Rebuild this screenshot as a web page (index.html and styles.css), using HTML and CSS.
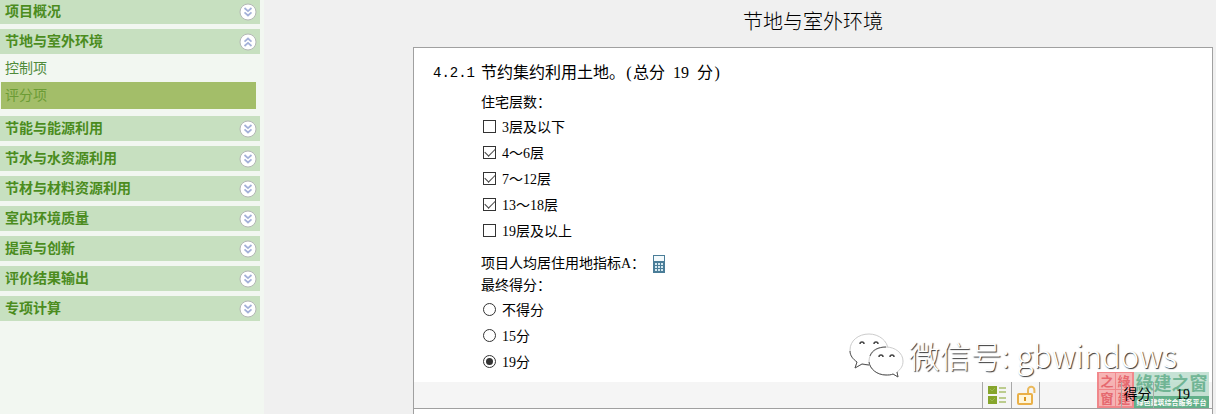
FILE: index.html
```
<!DOCTYPE html>
<html lang="zh-CN">
<head>
  <meta charset="UTF-8">
  <title>节地与室外环境</title>
  <meta name="viewport" content="width=device-width, initial-scale=1">
  <link rel="stylesheet" href="styles.css">
</head>
<body>

  <!-- 箭头图标 -->
  <svg class="defs" width="0" height="0" aria-hidden="true">
    <symbol id="down" viewBox="0 0 18 18">
      <circle cx="9" cy="9" r="8" fill="#fff" stroke="#b4b8b6"/>
      <path d="M5.5 5l3.5 3.2L12.5 5M5.5 9.3l3.5 3.2 3.5-3.2" fill="none" stroke="#a3b0d8" stroke-width="1.7"/>
    </symbol>
    <symbol id="up" viewBox="0 0 18 18">
      <circle cx="9" cy="9" r="8" fill="#fff" stroke="#b4b8b6"/>
      <path d="M5.5 8.7L9 5.5l3.5 3.2M5.5 13L9 9.8l3.5 3.2" fill="none" stroke="#a3b0d8" stroke-width="1.7"/>
    </symbol>
  </svg>

  <nav class="sidebar">
    <button class="menu">项目概况<svg><use href="#down"/></svg></button>
    <button class="menu">节地与室外环境<svg><use href="#up"/></svg></button>
    <div class="submenu">
      <a href="#control">控制项</a>
      <a href="#score" class="active">评分项</a>
    </div>
    <button class="menu">节能与能源利用<svg><use href="#down"/></svg></button>
    <button class="menu">节水与水资源利用<svg><use href="#down"/></svg></button>
    <button class="menu">节材与材料资源利用<svg><use href="#down"/></svg></button>
    <button class="menu">室内环境质量<svg><use href="#down"/></svg></button>
    <button class="menu">提高与创新<svg><use href="#down"/></svg></button>
    <button class="menu">评价结果输出<svg><use href="#down"/></svg></button>
    <button class="menu">专项计算<svg><use href="#down"/></svg></button>
  </nav>

  <main>
    <h1>节地与室外环境</h1>

    <section class="card">
      <h2><span class="no">4.2.1</span>节约集约利用土地。<span class="paren">(</span>总分<span class="num">19</span>分<span class="paren">)</span></h2>

      <form class="content">
        <div class="caption">住宅层数：</div>
        <label class="option"><input type="checkbox">3层及以下</label>
        <label class="option"><input type="checkbox" checked>4～6层</label>
        <label class="option"><input type="checkbox" checked>7～12层</label>
        <label class="option"><input type="checkbox" checked>13～18层</label>
        <label class="option"><input type="checkbox">19层及以上</label>

        <div class="caption target">项目人均居住用地指标A：
          <button type="button" class="calc" aria-label="计算">
            <svg width="14" height="18" viewBox="0 0 14 18">
              <rect x="1" y="0" width="12" height="18" fill="#4a7d98"/>
              <rect x="2" y="1" width="10" height="5" fill="#f4fafc"/>
              <path d="M3 8h2v2H3zM6 8h2v2H6zM9 8h2v2H9zM3 11h2v2H3zM6 11h2v2H6zM9 11h2v2H9zM3 14h2v2H3zM6 14h2v2H6zM9 14h2v2H9z" fill="#d5e8f0"/>
            </svg>
          </button>
        </div>
        <div class="caption">最终得分：</div>
        <label class="option"><input type="radio" name="score">不得分</label>
        <label class="option"><input type="radio" name="score">15分</label>
        <label class="option"><input type="radio" name="score" checked>19分</label>
      </form>

      <div class="toolbar">
        <button class="tool" aria-label="列表">
          <svg width="20" height="20" viewBox="0 0 20 20">
            <path d="M1 1h9v8H1zM1 11h9v8H1z" fill="#86a52c"/>
            <path d="M3 4l2 2 3-3M3 14l2 2 3-3" fill="none" stroke="#9cb850"/>
            <path d="M12 3h7M12 7h7M12 13h7M12 17h7" stroke="#a9bf6c" stroke-width="1.5"/>
          </svg>
        </button>
        <button class="tool" aria-label="解锁">
          <svg width="20" height="20" viewBox="0 0 20 20">
            <rect x="2" y="9" width="14" height="10" rx="1" fill="#fff6da" stroke="#eab048" stroke-width="2"/>
            <path d="M12 8V5a3.2 3.2 0 0 1 6.4 0v3" fill="none" stroke="#eab95c" stroke-width="2"/>
            <path d="M9 12v4" stroke="#d99520" stroke-width="2"/>
          </svg>
        </button>
        <span class="score-label">得分</span>
        <span class="score-value">19</span>
      </div>

      <!-- 水印 -->
      <div class="wechat">
        <svg width="56" height="46" viewBox="0 0 56 46">
          <g fill="#fff" stroke="#ccc" stroke-width="1">
            <path d="M21 2C10 2 2 9 2 18c0 5 3 9 7 12L7 36l7-4c3 1 5 1 8 1 9 0 18-6 18-15S31 2 21 2z"/>
            <path d="M38 15c-9 0-17 6-17 14s8 14 17 14c2 0 5 0 7-1l5 3-1-5c4-3 6-6 6-11 0-8-8-14-17-14z"/>
          </g>
          <path d="M2 19c0 5 3 8 7 11L7 36l7-4 7 1M21 30c1 7 8 13 17 13 2 0 5 0 7-1l5 3-1-5M22 24c2-6 8-9 16-9" fill="none" stroke="#555"/>
          <path d="M12 12a2 2 0 0 1 4 0M26 12a2 2 0 0 1 4 0M31 25a2 2 0 0 1 4 0M42 25a2 2 0 0 1 4 0" fill="none" stroke="#444" stroke-width="1.5"/>
        </svg>
        <span>微信号: gbwindows</span>
      </div>
      <div class="stamp">
        <div class="seal"><i>之</i><i>綠</i><i>窗</i><i>建</i></div>
        <div class="brand">
          <b>綠建之窗</b>
          <small>绿色建筑综合服务平台</small>
        </div>
      </div>
    </section>
    <section class="card next"></section>
  </main>

</body>
</html>
```
FILE: styles.css
```
* {
  box-sizing: border-box;
}

body {
  margin: 0;
  display: flex;
  min-height: 100vh;
  background: #f0f0f0;
  color: #000;
  font-family: "Liberation Serif", "Noto Sans CJK SC", serif;
  font-size: 14px;
}

button {
  border: none;
  padding: 0;
  background: none;
  cursor: pointer;
}

.defs {
  position: absolute;
}

/* 左侧菜单 */
.sidebar {
  flex: 0 0 264px;
  margin-top: -1px;
  padding-right: 4px;
  background: #f2f7f1;
  font-family: "Noto Sans CJK SC", sans-serif;
}

.menu {
  display: flex;
  align-items: center;
  justify-content: space-between;
  width: 100%;
  height: 25px;
  margin-bottom: 5px;
  padding: 0 3px 3px 5px;
  background: #c7e0c0;
  color: #4b8c1e;
  font-family: inherit;
  font-size: 14px;
  font-weight: bold;
  line-height: 22px;
}

.menu svg {
  width: 18px;
  height: 18px;
  margin-top: 3px;
}

.submenu {
  margin: -5px 4px 7px 1px;
  padding-top: 1px;
}

.submenu a {
  display: block;
  padding: 0 0 2px 4px;
  line-height: 25px;
  color: #4f8a3a;
  text-decoration: none;
}

.submenu .active {
  background: #a3be69;
  color: #6c9c35;
}

/* 右侧内容 */
main {
  flex: 1;
  display: flex;
  flex-direction: column;
  padding: 0 3px 0 149px;
}

h1 {
  margin: 0;
  padding: 7px 0 10px;
  font-size: 20px;
  font-weight: 300;
  line-height: 30px;
  text-align: center;
}

.card {
  position: relative;
  border: 1px solid #a0a0a0;
  background: #fff;
}

.card.next {
  flex: 1;
  border-width: 0 1px;
}

h2 {
  display: flex;
  margin: 0;
  padding: 13px 0 8px 19px;
  font-size: 16px;
  font-weight: normal;
  line-height: 24px;
}

.no {
  width: 48px;
  font-family: "Liberation Mono", monospace;
  font-size: 14px;
}

.paren {
  width: 8px;
  text-align: center;
}

.num {
  margin: 0 8px;
}

.content {
  padding-left: 67px;
}

.caption {
  line-height: 20px;
}

.target {
  display: flex;
  align-items: center;
  gap: 7px;
  padding: 11px 0 2px;
}

.calc {
  height: 18px;
}

.calc svg {
  display: block;
}

.option {
  display: flex;
  align-items: center;
  gap: 6px;
  width: max-content;
  height: 26px;
  padding-left: 2px;
}

.option input {
  appearance: none;
  display: grid;
  place-items: center;
  width: 13px;
  height: 13px;
  margin: 0;
  border: 1px solid #333;
  background: #fff;
}

.option input[type="radio"] {
  border-radius: 50%;
}

.option input[type="checkbox"]:checked::before {
  content: "";
  width: 9px;
  height: 5px;
  margin-top: -3px;
  border: solid #444;
  border-width: 0 0 1px 1px;
  transform: rotate(-45deg);
}

.option input[type="radio"]:checked::before {
  content: "";
  width: 7px;
  height: 7px;
  border-radius: 50%;
  background: #333;
}

/* 底部工具条 */
.toolbar {
  display: flex;
  justify-content: flex-end;
  height: 26px;
  margin-top: 8px;
  background: #f5f5f5;
  line-height: 26px;
}

.tool {
  display: flex;
  align-items: center;
  justify-content: center;
  width: 29px;
  border-left: 1px solid #a8a8a8;
}

.tool + .tool {
  border-right: 1px solid #a8a8a8;
}

.score-label,
.score-value {
  position: relative;
  z-index: 1;
  text-align: center;
}

.score-label {
  width: 33px;
  margin-left: 81px;
  border: solid #a8a8a8;
  border-width: 0 1px;
}

.score-value {
  width: 58px;
}

/* 水印 */
.wechat {
  position: absolute;
  right: 35px;
  bottom: 30px;
  display: flex;
  align-items: center;
  gap: 5px;
  color: #fff;
  font-family: "Noto Sans CJK SC", sans-serif;
  font-size: 31px;
  font-weight: 300;
  line-height: 46px;
  text-shadow: 1px 1px 1px #333;
  white-space: nowrap;
  pointer-events: none;
}

.stamp {
  position: absolute;
  right: 3px;
  bottom: 0;
  display: flex;
  height: 36px;
  font-family: "Noto Sans CJK TC", sans-serif;
  opacity: 0.8;
  pointer-events: none;
}

.seal {
  display: grid;
  grid-template: 16px 16px / 16px 16px;
  gap: 1px;
  padding: 1px 2px;
  background: #ef6b70;
}

.seal i {
  background: #f5a3a3;
  color: #e2454d;
  font-size: 13px;
  font-style: normal;
  font-weight: bold;
  line-height: 16px;
  text-align: center;
}

.brand {
  width: 75px;
  background: #b9dccb;
  text-align: center;
}

.brand b {
  display: block;
  height: 24px;
  color: #4fa57c;
  font-size: 18px;
  line-height: 20px;
}

.brand small {
  display: block;
  background: #3f9f70;
  color: #fff;
  font-family: "Noto Sans CJK SC", sans-serif;
  font-size: 7px;
  font-weight: bold;
  line-height: 12px;
}
```
